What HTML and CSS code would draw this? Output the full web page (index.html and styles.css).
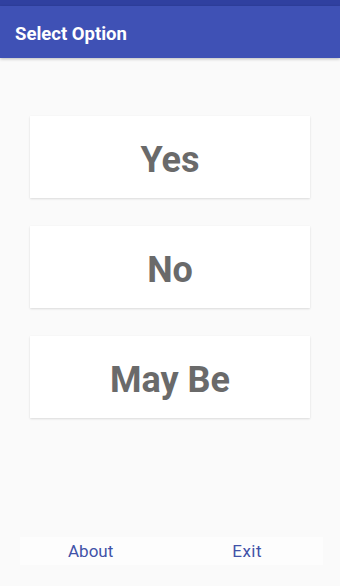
FILE: index.html
```html
<!DOCTYPE html>
<html>
<head>
<meta charset="utf-8">
<link rel="stylesheet" href="styles.css">
</head>
<body>
<div class="app">
  <div class="statusbar"></div>
  <div class="toolbar"><span class="title">Select Option</span></div>
  <div class="options">
    <div class="card">Yes</div>
    <div class="card">No</div>
    <div class="card">May Be</div>
  </div>
  <div class="bottombar">
    <span class="link about">About</span>
    <span class="link exit">Exit</span>
  </div>
</div>
</body>
</html>
```
FILE: styles.css
```css
html, body {
  margin: 0;
  padding: 0;
  background: #fafafa;
  font-family: Roboto, "Liberation Sans", sans-serif;
}
.app {
  width: 340px;
  height: 586px;
  display: flex;
  flex-direction: column;
  background: #fafafa;
}
.statusbar {
  height: 6px;
  background: #3040a0;
}
.toolbar {
  height: 52px;
  box-sizing: border-box;
  padding-top: 4px;
  background: #3f51b5;
  display: flex;
  align-items: center;
  padding-left: 15px;
  box-shadow: 0 1px 3px rgba(0,0,0,0.25);
}
.title {
  color: #ffffff;
  font-size: 18.5px;
  font-weight: 700;
}
.options {
  display: flex;
  flex-direction: column;
  gap: 28px;
  padding: 58px 30px 0 30px;
  flex: 1;
}
.card {
  height: 82px;
  box-sizing: border-box;
  padding-top: 5px;
  background: #ffffff;
  display: flex;
  align-items: center;
  justify-content: center;
  color: #6a6a6a;
  font-size: 36px;
  font-weight: 700;
  box-shadow: 0 1px 2px rgba(0,0,0,0.12), 0 0 1px rgba(0,0,0,0.04);
}
.bottombar {
  margin: 0 17px 21px 20px;
  height: 28px;
  background: #fdfdfd;
  display: flex;
  align-items: center;
}
.link {
  color: #4152a8;
  font-size: 17px;
}
.about {
  margin-left: 48px;
}
.exit {
  margin-left: 119px;
  letter-spacing: 0.5px;
}
```
